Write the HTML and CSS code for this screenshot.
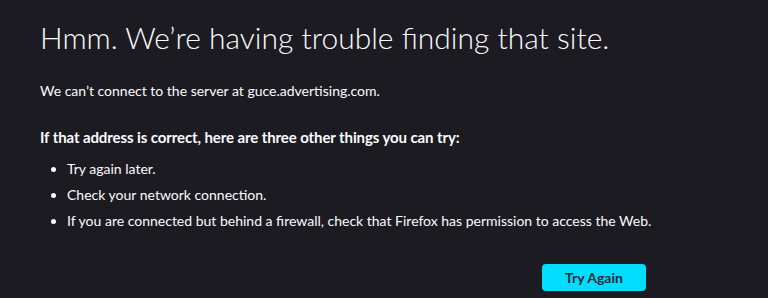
FILE: index.html
```html
<!DOCTYPE html>
<html lang="en">
<head>
    <meta charset="UTF-8">
    <title>Problem loading page</title>
    <link rel="stylesheet" href="styles.css">
</head>
<body>
    <div class="container">
        <h1 class="titulo">Hmm. We’re having trouble finding that site.</h1>

        <p class="desc">We can’t connect to the server at guce.advertising.com.</p>

        <p class="dicas-titulo">If that address is correct, here are three other things you can try:</p>
        <ul class="dicas">
            <li>Try again later.</li>
            <li>Check your network connection.</li>
            <li>If you are connected but behind a firewall, check that Firefox has permission to access the Web.</li>
        </ul>

        <div class="acoes">
            <button class="btn-primario">Try Again</button>
        </div>
    </div>
</body>
</html>
```

FILE: styles.css
```css
body {
    font-family: Lato, "Noto Sans", sans-serif;
    font-size: 14px;
    background: #1c1b22;
    color: #fbfbfe;
    margin: 0;
}

.container {
    width: 606px;
    padding: 0 40px;
}

.titulo {
    font-size: 30px;
    font-weight: 300;
    line-height: 40px;
    margin: 17px 0 0;
    white-space: nowrap;
}

.desc {
    line-height: 20px;
    margin: 24px 0 0;
}

.dicas-titulo {
    font-size: 15px;
    font-weight: bold;
    letter-spacing: -0.1px;
    line-height: 20px;
    margin: 26px 0 0;
}

.dicas {
    margin: 12px 0 0;
    padding-left: 27px;
}

.dicas li {
    line-height: 20px;
    white-space: nowrap;
}

.dicas li + li {
    margin-top: 6px;
}

.acoes {
    display: flex;
    justify-content: flex-end;
    margin-top: 33px;
}

.btn-primario {
    font-family: inherit;
    font-size: 14px;
    font-weight: bold;
    color: #2b2a33;
    background: #00ddff;
    border: none;
    border-radius: 4px;
    width: 104px;
    height: 27px;
    padding: 0;
}
```
